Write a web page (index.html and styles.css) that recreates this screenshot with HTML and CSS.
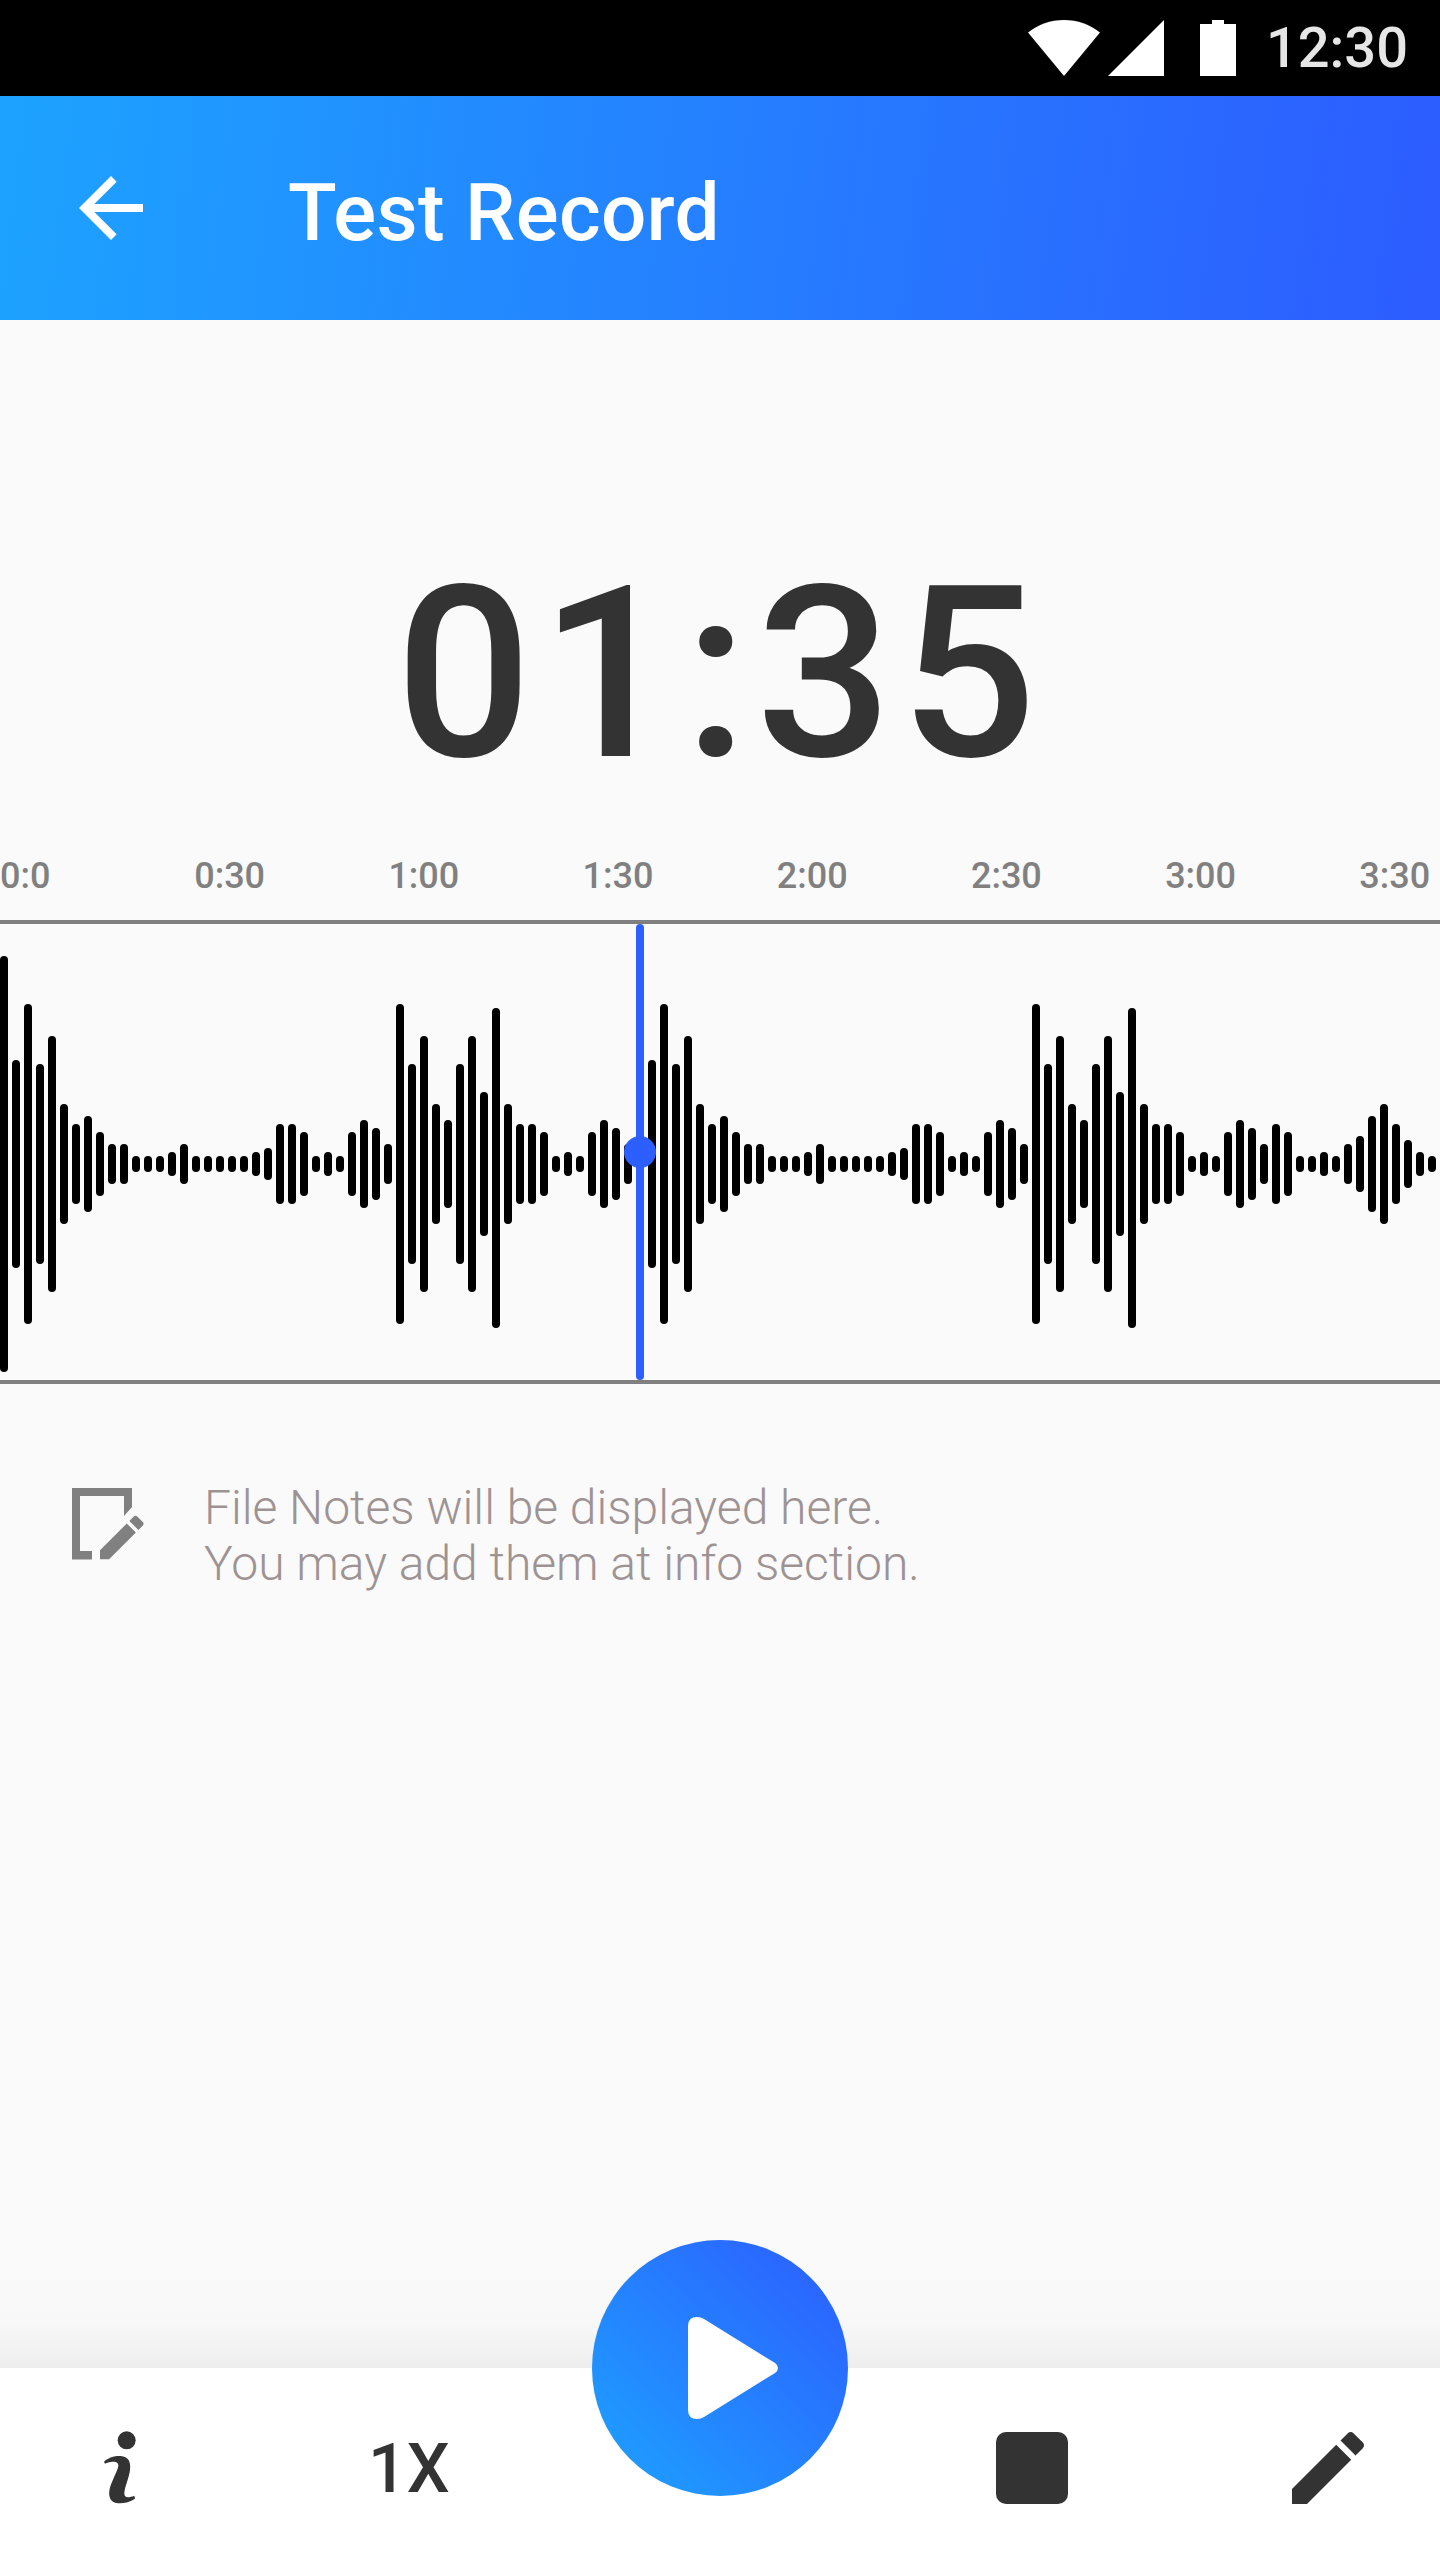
FILE: index.html
```html
<!DOCTYPE html>
<html lang="en">

<head>
  <meta charset="UTF-8">
  <meta name="viewport" content="width=device-width, initial-scale=1.0">
  <title>Test Record</title>
  <link rel="stylesheet" href="styles.css">
</head>

<body>
  <!-- Status bar -->
  <div class="status-bar">
    <svg class="icon-wifi" width="72" height="56" viewBox="0 0 72 56"><path d="M0 12.5C10 4.500 22.500 0 36 0s26 4.500 36 12.500L36 56z"/></svg>
    <svg class="icon-signal" width="56" height="56" viewBox="0 0 56 56"><path d="M0 56L56 0v56z"/></svg>
    <svg class="icon-battery" width="36" height="56" viewBox="0 0 36 56"><path d="M12 0h12v4h12v52H0V4h12z"/></svg>
    <span class="clock">12:30</span>
  </div>

  <!-- Header -->
  <div class="app-header">
    <svg class="back" width="96" height="96" viewBox="0 0 24 24"><path d="M20 11H7.830l5.590-5.590L12 4l-8 8 8 8 1.410-1.410L7.830 13H20v-2z"/></svg>
    <h1>Test Record</h1>
  </div>

  <!-- Timer and waveform -->
  <div class="timer">01:35</div>

  <div class="ticks">
    <span>0:0</span><span>0:30</span><span>1:00</span><span>1:30</span><span>2:00</span><span>2:30</span><span>3:00</span><span>3:30</span>
  </div>

  <div class="wave">
    <div class="bars">
      <i style="height:416px"></i><i style="height:208px"></i><i style="height:320px"></i><i style="height:200px"></i><i style="height:256px"></i><i style="height:120px"></i><i style="height:80px"></i><i style="height:96px"></i><i style="height:64px"></i><i style="height:40px"></i>
      <i style="height:40px"></i><i style="height:16px"></i><i style="height:16px"></i><i style="height:16px"></i><i style="height:24px"></i><i style="height:40px"></i><i style="height:16px"></i><i style="height:16px"></i><i style="height:16px"></i><i style="height:16px"></i>
      <i style="height:16px"></i><i style="height:24px"></i><i style="height:32px"></i><i style="height:80px"></i><i style="height:80px"></i><i style="height:64px"></i><i style="height:16px"></i><i style="height:24px"></i><i style="height:16px"></i><i style="height:64px"></i>
      <i style="height:88px"></i><i style="height:72px"></i><i style="height:40px"></i><i style="height:320px"></i><i style="height:200px"></i><i style="height:256px"></i><i style="height:120px"></i><i style="height:88px"></i><i style="height:200px"></i><i style="height:256px"></i>
      <i style="height:144px"></i><i class="low" style="height:320px"></i><i style="height:120px"></i><i style="height:80px"></i><i style="height:80px"></i><i style="height:64px"></i><i style="height:16px"></i><i style="height:24px"></i><i style="height:16px"></i><i style="height:64px"></i>
      <i style="height:88px"></i><i style="height:72px"></i><i style="height:40px"></i><i style="height:416px"></i><i style="height:208px"></i><i style="height:320px"></i><i style="height:200px"></i><i style="height:256px"></i><i style="height:120px"></i><i style="height:80px"></i>
      <i style="height:96px"></i><i style="height:64px"></i><i style="height:40px"></i><i style="height:40px"></i><i style="height:16px"></i><i style="height:16px"></i><i style="height:16px"></i><i style="height:24px"></i><i style="height:40px"></i><i style="height:16px"></i>
      <i style="height:16px"></i><i style="height:16px"></i><i style="height:16px"></i><i style="height:16px"></i><i style="height:24px"></i><i style="height:32px"></i><i style="height:80px"></i><i style="height:80px"></i><i style="height:64px"></i><i style="height:16px"></i>
      <i style="height:24px"></i><i style="height:16px"></i><i style="height:64px"></i><i style="height:88px"></i><i style="height:72px"></i><i style="height:40px"></i><i style="height:320px"></i><i style="height:200px"></i><i style="height:256px"></i><i style="height:120px"></i>
      <i style="height:88px"></i><i style="height:200px"></i><i style="height:256px"></i><i style="height:144px"></i><i class="low" style="height:320px"></i><i style="height:120px"></i><i style="height:80px"></i><i style="height:80px"></i><i style="height:64px"></i><i style="height:16px"></i>
      <i style="height:24px"></i><i style="height:16px"></i><i style="height:64px"></i><i style="height:88px"></i><i style="height:72px"></i><i style="height:40px"></i><i style="height:80px"></i><i style="height:64px"></i><i style="height:16px"></i><i style="height:16px"></i>
      <i style="height:24px"></i><i style="height:16px"></i><i style="height:40px"></i><i style="height:56px"></i><i style="height:96px"></i><i style="height:120px"></i><i style="height:80px"></i><i style="height:48px"></i><i style="height:24px"></i><i style="height:16px"></i>
    </div>
    <div class="playhead"></div>
    <div class="playhead-dot"></div>
  </div>

  <!-- Notes -->
  <div class="notes">
    <svg class="notes-icon" width="72" height="72" viewBox="0 0 72 72">
      <path d="M0 0h60v19l-8 9V8H8v55h12v8.500H0z"/>
      <path transform="translate(20.750 20.500) scale(2.420)" d="M3 17.250V21h3.750L17.810 9.940l-3.750-3.750L3 17.250zM20.710 7.040c.39-.39.39-1.020 0-1.410l-2.340-2.340c-.39-.39-1.020-.39-1.410 0l-1.830 1.830 3.750 3.750 1.830-1.830z"/>
    </svg>
    <p>File Notes will be displayed here.<br>You may add them at info section.</p>
  </div>

  <div class="spacer"></div>

  <!-- Bottom controls -->
  <div class="controls">
    <div class="controls-group left">
      <svg width="100" height="100" viewBox="0 0 300 300">
        <circle cx="140" cy="61" r="27"/>
        <path d="M72 125C85 112 105 107 122 108C145 110 153 125 150 150C147 175 132 205 133 222C134 235 148 233 163 227L165 236C150 245 132 251 115 250C95 248 85 235 88 212C91 190 112 155 115 138C116 127 105 124 93 126C85 127 78 129 75 131z"/>
      </svg>
      <span class="speed">1X</span>
    </div>
    <div class="controls-group right">
      <div class="stop"></div>
      <svg width="96" height="96" viewBox="0 0 24 24"><path d="M3 17.250V21h3.750L17.810 9.940l-3.750-3.750L3 17.250zM20.710 7.040c.39-.39.39-1.020 0-1.410l-2.340-2.340c-.39-.39-1.020-.39-1.410 0l-1.830 1.830 3.750 3.750 1.830-1.830z"/></svg>
    </div>
    <div class="play">
      <svg width="140" height="140" viewBox="0 0 140 140"><path d="M28 26Q28 17 37 17Q41 17 44 19L115 63Q118 65 118 68Q118 71 115 73L44 117Q41 119 37 119Q28 119 28 110z"/></svg>
    </div>
  </div>
</body>

</html>
```

FILE: styles.css
```css
html,
body {
  margin: 0;
  height: 100%;
}

body {
  display: flex;
  flex-direction: column;
  width: 1440px;
  height: 2560px;
  overflow: hidden;
  font-family: Roboto, sans-serif;
  background-color: #fafafa;
  color: #333;
}

/* status bar */
.status-bar {
  display: flex;
  align-items: center;
  justify-content: flex-end;
  height: 96px;
  padding-right: 32px;
  background-color: #000;
}

.status-bar svg {
  fill: #fff;
}

.icon-signal {
  margin-left: 8px;
}

.icon-battery {
  margin-left: 36px;
}

.clock {
  margin-left: 30px;
  font-size: 56px;
  font-weight: 500;
  line-height: 96px;
  color: #e6e6e6;
}

/* header */
.app-header {
  display: flex;
  align-items: center;
  height: 224px;
  padding-left: 63px;
  background: linear-gradient(97deg, #1da3ff 0%, #2d5cff 100%);
}

.back {
  fill: #fff;
}

.app-header h1 {
  margin: 10px 0 0 129px;
  font-size: 80px;
  font-weight: 500;
  line-height: 80px;
  letter-spacing: 0.3px;
  color: #fff;
}

/* timer */
.timer {
  margin-top: 234px;
  font-size: 240px;
  font-weight: 500;
  line-height: 240px;
  letter-spacing: 8px;
  text-align: center;
}

.ticks {
  display: grid;
  grid-template-columns: repeat(7, 194.2px) 1fr;
  margin-top: 64px;
  font-size: 36px;
  font-weight: 500;
  line-height: 36px;
  color: #808080;
}

/* waveform */
.wave {
  position: relative;
  height: 456px;
  margin-top: 26px;
  border-top: 4px solid #808080;
  border-bottom: 4px solid #808080;
}

.bars {
  display: flex;
  align-items: center;
  gap: 4px;
  height: 432px;
  padding-top: 24px;
}

.bars i {
  flex: none;
  width: 8px;
  border-radius: 4px;
  background-color: #000;
}

.bars .low {
  margin-top: 8px;
}

.playhead {
  position: absolute;
  top: 0;
  bottom: 0;
  left: 636px;
  width: 8px;
  border-radius: 4px;
  background-color: #2d5fff;
}

.playhead-dot {
  position: absolute;
  top: 212px;
  left: 624px;
  width: 32px;
  height: 32px;
  border-radius: 50%;
  background-color: #2d5fff;
}

/* notes */
.notes {
  display: flex;
  align-items: flex-start;
  margin-top: 96px;
  padding-left: 72px;
}

.notes-icon {
  flex: none;
  margin-top: 8px;
  fill: #808080;
}

.notes p {
  margin: 0 0 0 60px;
  font-size: 48px;
  font-weight: 300;
  line-height: 56px;
  color: #9e9393;
}

.spacer {
  flex: 1;
}

/* bottom controls */
.controls {
  position: relative;
  display: flex;
  justify-content: space-between;
  height: 140px;
  padding: 52px 64px 0 80px;
  background-color: #fff;
}

.controls::before {
  content: "";
  position: absolute;
  top: -96px;
  left: 0;
  right: 0;
  height: 96px;
  background: linear-gradient(#fafafa 0%, #f8f8f8 50%, #eee 100%);
}

.controls-group {
  display: flex;
  align-items: flex-start;
}

.controls svg {
  flex: none;
  fill: #333;
}

.left {
  gap: 188px;
}

.right {
  gap: 212px;
}

.speed {
  margin-top: 15px;
  font-size: 68px;
  font-weight: 500;
  line-height: 68px;
}

.stop {
  width: 72px;
  height: 72px;
  margin-top: 12px;
  border-radius: 10px;
  background-color: #333;
}

.play {
  position: absolute;
  top: -128px;
  left: 592px;
  display: flex;
  align-items: center;
  justify-content: center;
  width: 256px;
  height: 256px;
  border-radius: 50%;
  background: linear-gradient(45deg, #1da3ff 0%, #2d5cff 100%);
}

.play svg {
  margin: 4px 0 0 20px;
  fill: #fff;
}
```
